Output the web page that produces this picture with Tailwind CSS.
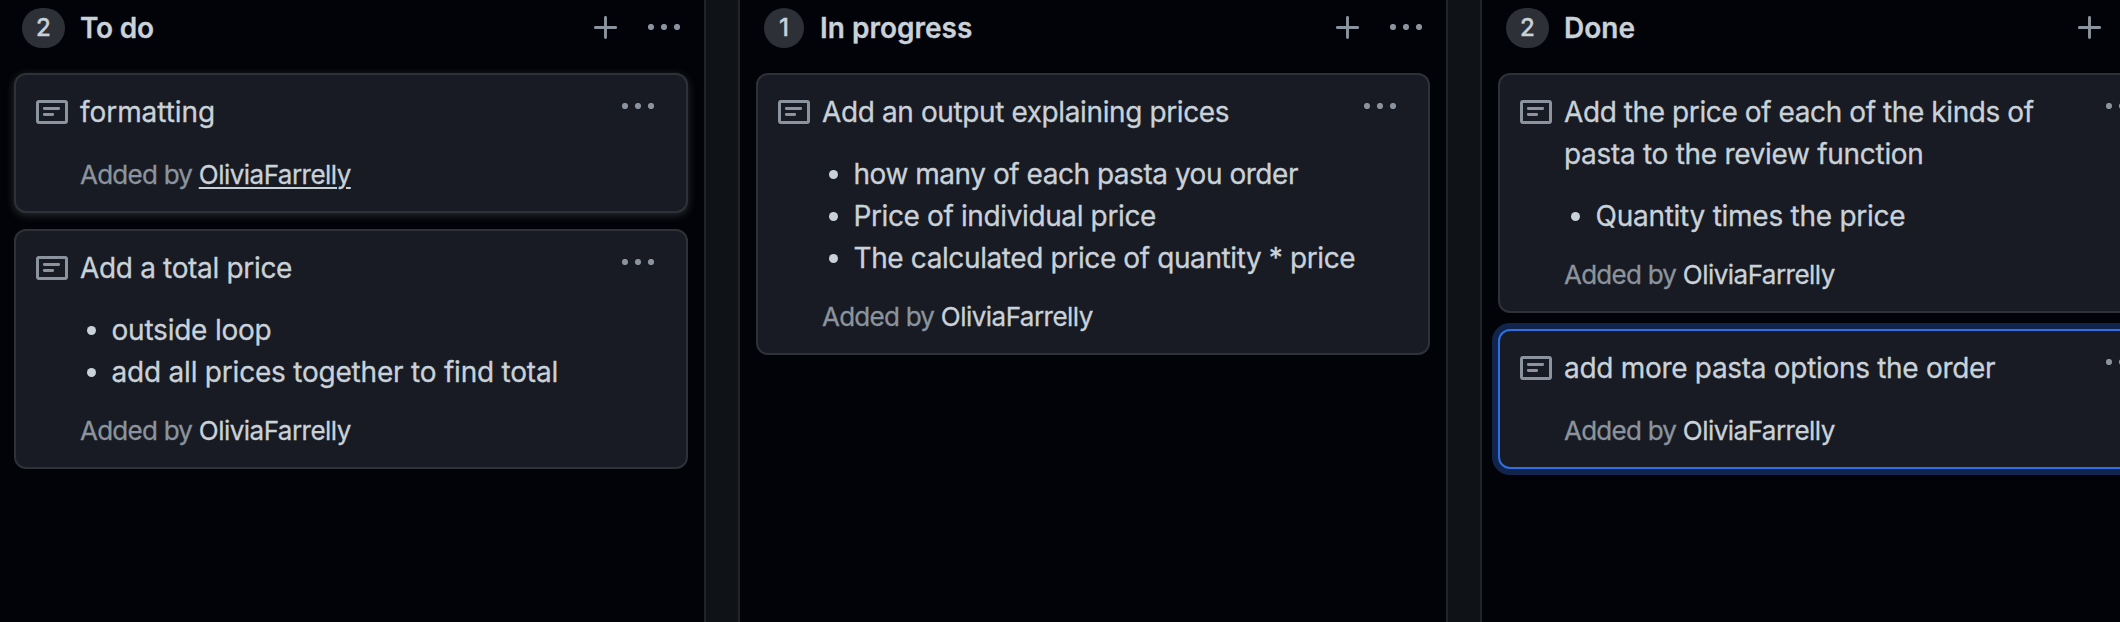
<!DOCTYPE html>
<html lang="en">
<head>
<meta charset="utf-8">
<title>Project board</title>
<script src="https://cdn.jsdelivr.net/npm/@tailwindcss/browser@4"></script>
</head>
<body class="h-[622px] overflow-hidden bg-[#0f1317] font-['Inter',sans-serif] text-[28px] leading-[42px] text-[#c9d1d9] [-webkit-text-stroke:0.3px]">
<svg class="hidden">
  <symbol id="note" viewBox="0 0 32 24">
    <rect x="1.5" y="1.5" width="29" height="21" rx="1.5" fill="none" stroke="currentColor" stroke-width="3"/>
    <path d="M8.3 8.5h14.4M8.3 14.5h8.4" fill="none" stroke="currentColor" stroke-width="2.9" stroke-linecap="round"/>
  </symbol>
  <symbol id="dots" viewBox="0 0 32 6">
    <circle cx="3" cy="3" r="3.1" fill="currentColor"/><circle cx="16" cy="3" r="3.1" fill="currentColor"/><circle cx="29" cy="3" r="3.1" fill="currentColor"/>
  </symbol>
  <symbol id="plus" viewBox="0 0 23 24">
    <path d="M11.5 1.4v20.2M1.4 11.5h20.2" fill="none" stroke="currentColor" stroke-width="2.9" stroke-linecap="round"/>
  </symbol>
</svg>
<main class="-ml-1 flex h-[622px] w-[2194px] gap-8">

  <section class="w-[710px] shrink-0 border-x-2 border-[#212429] bg-[#020308] px-4 pt-[7px]">
    <header class="mb-6 flex h-[42px] items-center pr-2 pl-2">
      <span class="flex h-10 w-[43px] items-center justify-center rounded-full bg-[#2e3038] text-2xl font-medium">2</span>
      <h2 class="ml-[15px] flex-1 font-semibold tracking-[-0.2px]">To do</h2>
      <svg class="h-6 w-[23px] text-[#8b949e]"><use href="#plus"/></svg>
      <svg class="mb-0.5 ml-[31px] h-1.5 w-8 overflow-visible text-[#8b949e]"><use href="#dots"/></svg>
    </header>
    <div class="flex flex-col gap-4">
      <article class="flex h-[140px] items-start rounded-xl border-2 border-[#2e3237] bg-[#181b23] pt-4 pr-8 pl-5 shadow-[0_2px_8px_rgba(110,118,129,0.36)]">
        <svg class="mt-[9px] h-6 w-8 shrink-0 text-[#8b949e]"><use href="#note"/></svg>
        <div class="ml-3 flex-1 whitespace-nowrap">
          <p class="tracking-[-0.06px]">formatting</p>
          <p class="mt-[22px] text-[26px] leading-[39px] tracking-[-0.52px] text-[#8b949e]"><span class="tracking-[-0.75px]">Added by </span><a class="text-[#c9d1d9] underline decoration-2 underline-offset-[3px]">OliviaFarrelly</a></p>
        </div>
        <svg class="mt-3 h-1.5 w-8 overflow-visible text-[#8b949e]"><use href="#dots"/></svg>
      </article>
      <article class="flex h-[240px] items-start rounded-xl border-2 border-[#2e3237] bg-[#181b23] pt-4 pr-8 pl-5">
        <svg class="mt-[9px] h-6 w-8 shrink-0 text-[#8b949e]"><use href="#note"/></svg>
        <div class="ml-3 flex-1 whitespace-nowrap">
          <p class="tracking-[-0.33px]">Add a total price</p>
          <ul class="mt-5">
            <li class="flex items-center"><span class="mr-[15.5px] ml-[7px] size-[9px] rounded-full bg-[#c9d1d9]"></span><span class="tracking-[-0.22px]">outside loop</span></li>
            <li class="flex items-center"><span class="mr-[15.5px] ml-[7px] size-[9px] rounded-full bg-[#c9d1d9]"></span><span class="tracking-[-0.21px]">add all prices together to find total</span></li>
          </ul>
          <p class="mt-[18px] text-[26px] leading-[39px] tracking-[-0.52px] text-[#8b949e]"><span class="tracking-[-0.75px]">Added by </span><a class="text-[#c9d1d9]">OliviaFarrelly</a></p>
        </div>
        <svg class="mt-3 h-1.5 w-8 overflow-visible text-[#8b949e]"><use href="#dots"/></svg>
      </article>
    </div>
  </section>

  <section class="w-[710px] shrink-0 border-x-2 border-[#212429] bg-[#020308] px-4 pt-[7px]">
    <header class="mb-6 flex h-[42px] items-center pr-2 pl-2">
      <span class="flex size-10 items-center justify-center rounded-full bg-[#2e3038] text-2xl font-medium">1</span>
      <h2 class="ml-4 flex-1 font-semibold">In progress</h2>
      <svg class="h-6 w-[23px] text-[#8b949e]"><use href="#plus"/></svg>
      <svg class="mb-0.5 ml-[31px] h-1.5 w-8 overflow-visible text-[#8b949e]"><use href="#dots"/></svg>
    </header>
    <article class="flex h-[282px] items-start rounded-xl border-2 border-[#2e3237] bg-[#181b23] pt-4 pr-8 pl-5">
      <svg class="mt-[9px] h-6 w-8 shrink-0 text-[#8b949e]"><use href="#note"/></svg>
      <div class="ml-3 w-0 flex-1 whitespace-nowrap">
        <p class="tracking-[-0.39px]">Add an output explaining prices</p>
        <ul class="mt-5">
          <li class="flex items-center"><span class="mr-[15.5px] ml-[7px] size-[9px] rounded-full bg-[#c9d1d9]"></span><span class="tracking-[-0.47px]">how many of each pasta you order</span></li>
          <li class="flex items-center"><span class="mr-[15.5px] ml-[7px] size-[9px] rounded-full bg-[#c9d1d9]"></span><span class="tracking-[-0.38px]">Price of individual price</span></li>
          <li class="flex items-center"><span class="mr-[15.5px] ml-[7px] size-[9px] shrink-0 rounded-full bg-[#c9d1d9]"></span><span class="tracking-[-0.39px]">The calculated price of quantity * price</span></li>
        </ul>
        <p class="mt-[18px] text-[26px] leading-[39px] tracking-[-0.52px] text-[#8b949e]"><span class="tracking-[-0.75px]">Added by </span><a class="text-[#c9d1d9]">OliviaFarrelly</a></p>
      </div>
      <svg class="mt-3 h-1.5 w-8 shrink-0 overflow-visible text-[#8b949e]"><use href="#dots"/></svg>
    </article>
  </section>

  <section class="w-[710px] shrink-0 border-x-2 border-[#212429] bg-[#020308] px-4 pt-[7px]">
    <header class="mb-6 flex h-[42px] items-center pr-2 pl-2">
      <span class="flex h-10 w-[43px] items-center justify-center rounded-full bg-[#2e3038] text-2xl font-medium">2</span>
      <h2 class="ml-[15px] flex-1 font-semibold">Done</h2>
      <svg class="h-6 w-[23px] text-[#8b949e]"><use href="#plus"/></svg>
      <svg class="mb-0.5 ml-[31px] h-1.5 w-8 overflow-visible text-[#8b949e]"><use href="#dots"/></svg>
    </header>
    <div class="flex flex-col gap-4">
      <article class="flex h-[240px] items-start rounded-xl border-2 border-[#2e3237] bg-[#181b23] pt-4 pr-8 pl-5">
        <svg class="mt-[9px] h-6 w-8 shrink-0 text-[#8b949e]"><use href="#note"/></svg>
        <div class="ml-3 flex-1 whitespace-nowrap">
          <p><span class="tracking-[-0.41px]">Add the price of each of the kinds of</span><br><span class="tracking-[-0.3px]">pasta to the review function</span></p>
          <ul class="mt-5">
            <li class="flex items-center"><span class="mr-[15.5px] ml-[7px] size-[9px] rounded-full bg-[#c9d1d9]"></span><span class="tracking-[-0.26px]">Quantity times the price</span></li>
          </ul>
          <p class="mt-[18px] text-[26px] leading-[39px] tracking-[-0.52px] text-[#8b949e]"><span class="tracking-[-0.75px]">Added by </span><a class="text-[#c9d1d9]">OliviaFarrelly</a></p>
        </div>
        <svg class="mt-3 h-1.5 w-8 overflow-visible text-[#8b949e]"><use href="#dots"/></svg>
      </article>
      <article class="flex h-[140px] items-start rounded-xl border-2 border-[#2f6fe3] bg-[#181b23] pt-4 pr-8 pl-5 shadow-[0_0_0_6px_#11254c]">
        <svg class="mt-[9px] h-6 w-8 shrink-0 text-[#8b949e]"><use href="#note"/></svg>
        <div class="ml-3 flex-1 whitespace-nowrap">
          <p class="tracking-[-0.3px]">add more pasta options the order</p>
          <p class="mt-[22px] text-[26px] leading-[39px] tracking-[-0.52px] text-[#8b949e]"><span class="tracking-[-0.75px]">Added by </span><a class="text-[#c9d1d9]">OliviaFarrelly</a></p>
        </div>
        <svg class="mt-3 h-1.5 w-8 overflow-visible text-[#8b949e]"><use href="#dots"/></svg>
      </article>
    </div>
  </section>
</main>
</body>
</html>
